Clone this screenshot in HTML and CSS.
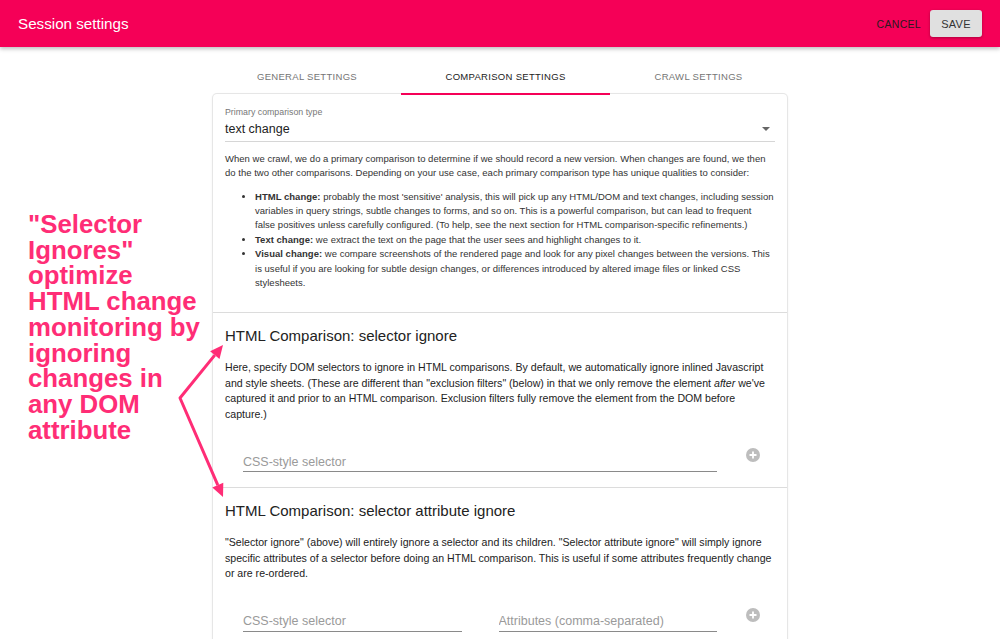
FILE: index.html
```html
<!DOCTYPE html>
<html lang="en">
  <head>
    <meta charset="UTF-8" />
    <meta name="viewport" content="width=device-width, initial-scale=1.0" />
    <title>Session settings</title>
    <link rel="stylesheet" href="styles.css">
  </head>
  <body>
    <header class="appbar">
      <h1 class="appbar-title">Session settings</h1>
      <div class="appbar-actions">
        <button type="button" class="btn-text">Cancel</button>
        <button type="button" class="btn-raised">Save</button>
      </div>
    </header>

    <main class="content">
      <nav class="tabs">
        <div class="tab tab-general">General settings</div>
        <div class="tab tab-comparison active">Comparison settings</div>
        <div class="tab tab-crawl">Crawl settings</div>
      </nav>

      <div class="card">
        <section class="card-section first">
          <div class="select">
            <label class="select-label">Primary comparison type</label>
            <div class="select-value">
              <span>text change</span>
              <span class="select-arrow"></span>
            </div>
          </div>
          <p class="small-text">
            When we crawl, we do a primary comparison to determine if we should record a new version. When changes are found, we then<br />
            do the two other comparisons. Depending on your use case, each primary comparison type has unique qualities to consider:
          </p>
          <ul class="small-list">
            <li><b>HTML change:</b> probably the most 'sensitive' analysis, this will pick up any HTML/DOM and text changes, including session<br />
              variables in query strings, subtle changes to forms, and so on. This is a powerful comparison, but can lead to frequent<br />
              false positives unless carefully configured. (To help, see the next section for HTML comparison-specific refinements.)</li>
            <li><b>Text change:</b> we extract the text on the page that the user sees and highlight changes to it.</li>
            <li><b>Visual change:</b> we compare screenshots of the rendered page and look for any pixel changes between the versions. This<br />
              is useful if you are looking for subtle design changes, or differences introduced by altered image files or linked CSS<br />
              stylesheets.</li>
          </ul>
        </section>

        <section class="card-section">
          <h2 class="section-title">HTML Comparison: selector ignore</h2>
          <p class="body-text">
            Here, specify DOM selectors to ignore in HTML comparisons. By default, we automatically ignore inlined Javascript<br />
            and style sheets. (These are different than "exclusion filters" (below) in that we only remove the element <i>after</i> we've<br />
            captured it and prior to an HTML comparison. Exclusion filters fully remove the element from the DOM before<br />
            capture.)
          </p>
          <div class="input-row">
            <div class="inputs">
              <input type="text" placeholder="CSS-style selector" />
            </div>
            <span class="add-icon">
              <svg width="14" height="14" viewBox="0 0 14 14">
                <circle cx="7" cy="7" r="7" fill="#bdbdbd" />
                <path d="M7 3.5v7M3.5 7h7" stroke="#fff" stroke-width="1.8" />
              </svg>
            </span>
          </div>
        </section>

        <section class="card-section">
          <h2 class="section-title">HTML Comparison: selector attribute ignore</h2>
          <p class="body-text">
            "Selector ignore" (above) will entirely ignore a selector and its children. "Selector attribute ignore" will simply ignore<br />
            specific attributes of a selector before doing an HTML comparison. This is useful if some attributes frequently change<br />
            or are re-ordered.
          </p>
          <div class="input-row">
            <div class="inputs">
              <input type="text" placeholder="CSS-style selector" />
              <input type="text" placeholder="Attributes (comma-separated)" />
            </div>
            <span class="add-icon">
              <svg width="14" height="14" viewBox="0 0 14 14">
                <circle cx="7" cy="7" r="7" fill="#bdbdbd" />
                <path d="M7 3.5v7M3.5 7h7" stroke="#fff" stroke-width="1.8" />
              </svg>
            </span>
          </div>
        </section>
      </div>
    </main>

    <div class="callout">
      "Selector<br />Ignores"<br />optimize<br />HTML change<br />monitoring by<br />ignoring<br />changes in<br />any DOM<br />attribute
    </div>

    <svg class="callout-arrows" width="1000" height="639" viewBox="0 0 1000 639">
      <polyline points="214.8,355.1 180,398 217.8,485.1" fill="none" stroke="#ff2d76" stroke-width="3" stroke-linejoin="round" />
      <polygon points="223,345 219.5,358.9 210.1,351.3" fill="#ff2d76" />
      <polygon points="223,497 223.3,482.7 212.3,487.5" fill="#ff2d76" />
    </svg>
  </body>
</html>
```

FILE: styles.css
```css
* {
  margin: 0;
  padding: 0;
  border: 0;
  box-sizing: border-box;
  font-family: "Liberation Sans", Arial, sans-serif;
}

body {
  background-color: #fff;
  width: 1000px;
  height: 639px;
  overflow: hidden;
  position: relative;
}

.appbar {
  height: 47px;
  background-color: #f50057;
  display: flex;
  justify-content: space-between;
  align-items: center;
  padding: 0 18px;
  box-shadow: 0 2px 4px rgba(0, 0, 0, 0.25);
  position: relative;
}

.appbar-title {
  font-size: 15.2px;
  font-weight: normal;
  color: #fff;
}

.appbar-actions {
  display: flex;
  align-items: center;
  gap: 9px;
}

button {
  background: none;
  font-size: 10.5px;
  text-transform: uppercase;
  color: #2b1a20;
  letter-spacing: 0.3px;
}

.btn-raised {
  background-color: #e0e0e0;
  width: 52px;
  height: 27px;
  border-radius: 3px;
  box-shadow: 0 1px 3px rgba(0, 0, 0, 0.3);
  color: #333;
  font-size: 11px;
}

.content {
  width: 574px;
  margin: 0 auto;
}

.tabs {
  display: flex;
  height: 48px;
}

.tab {
  display: flex;
  justify-content: center;
  align-items: center;
  padding-top: 12px;
  font-size: 9.5px;
  letter-spacing: 0.3px;
  text-transform: uppercase;
  color: #757575;
  border-bottom: 2px solid transparent;
}

.tab-general {
  width: 188px;
}

.tab-comparison {
  width: 209px;
}

.tab-crawl {
  width: 177px;
}

.tab.active {
  color: #222;
  border-bottom-color: #f50057;
}

.card {
  border-radius: 4px;
  box-shadow: 0 0 0 1px #e6e6e6, 0 1px 3px rgba(0, 0, 0, 0.12);
  margin-top: -1px;
}

.card-section {
  padding: 13px 12px 15px;
  border-top: 1px solid #dcdcdc;
}

.card-section.first {
  border-top: 0;
  padding: 13px 12px 22px;
}

.select-label {
  display: block;
  font-size: 8.8px;
  color: #777;
  line-height: 11px;
}

.select-value {
  display: flex;
  justify-content: space-between;
  align-items: center;
  font-size: 12.5px;
  color: #222;
  height: 24px;
  padding-bottom: 1px;
  border-bottom: 1px solid #d6d6d6;
}

.select-arrow {
  width: 0;
  height: 0;
  border-left: 4px solid transparent;
  border-right: 4px solid transparent;
  border-top: 4px solid #666;
  margin-right: 5px;
}

.small-text {
  font-size: 9.5px;
  letter-spacing: 0.02px;
  line-height: 14.3px;
  color: #333;
  margin-top: 10px;
  white-space: nowrap;
}

.small-list {
  font-size: 9.5px;
  letter-spacing: 0.02px;
  line-height: 14.4px;
  color: #333;
  margin-top: 9px;
  padding-left: 30px;
  white-space: nowrap;
}

.section-title {
  font-size: 15px;
  font-weight: normal;
  color: #222;
  line-height: 20px;
}

.body-text {
  font-size: 10.6px;
  line-height: 15.5px;
  color: #222;
  margin-top: 14px;
  white-space: nowrap;
}

.input-row {
  display: flex;
  align-items: flex-start;
  margin-top: 26px;
  padding-left: 18px;
}

.inputs {
  display: flex;
  gap: 37px;
  width: 474px;
}

input {
  flex: 1;
  min-width: 0;
  height: 24px;
  padding-top: 4px;
  font-size: 12.5px;
  color: #333;
  border-bottom: 1px solid #8a8a8a;
  outline: none;
}

input::placeholder {
  color: #9a9a9a;
}

.add-icon {
  margin-left: 29px;
  margin-top: 0;
  display: block;
  height: 14px;
}

.callout {
  position: absolute;
  left: 28px;
  top: 212px;
  font-size: 25.8px;
  line-height: 25.7px;
  font-weight: bold;
  color: #ff2d76;
}

.callout-arrows {
  position: absolute;
  left: 0;
  top: 0;
  pointer-events: none;
}
```
